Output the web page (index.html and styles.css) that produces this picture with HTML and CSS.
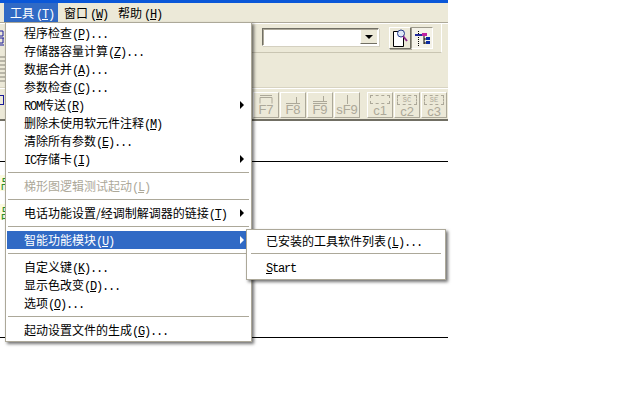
FILE: index.html
```html
<!DOCTYPE html>
<html lang="zh">
<head>
<meta charset="utf-8">
<title>工具菜单</title>
<link rel="stylesheet" href="styles.css">
</head>
<body>
<div class="app">
  <div class="titlebar"></div>
  <div class="menubar">
    <div class="top-item active">工具<span class="lat gap">(<u>T</u>)</span></div>
    <div class="top-item">窗口<span class="lat gap">(<u>W</u>)</span></div>
    <div class="top-item">帮助<span class="lat gap">(<u>H</u>)</span></div>
  </div>
  <div class="toolbar row-one">
    <svg class="left-bit" width="5" height="18" viewBox="0 0 5 18"><path d="M0 2h3v5H0M0 9h4M3 9v5H0M0 16h4" fill="none" stroke="#1a1a9a"/></svg>
    <div class="tool-group">
      <div class="combo"><span class="combo-btn"><i class="combo-arrow"></i></span></div>
      <button class="icon-btn raised">
        <svg width="20" height="20" viewBox="0 0 20 20"><path d="M3.500 3.500h7l3 3v12h-10z" fill="#fff" stroke="#000"/><circle cx="11" cy="5.500" r="3.500" fill="#dfe8f6" stroke="#223a8c"/><path d="M13 8l4 5" stroke="#8a2a8a" stroke-width="2"/></svg>
      </button>
      <button class="icon-btn pressed">
        <svg width="20" height="20" viewBox="0 0 20 20"><path d="M6.500 3v15" stroke="#000" stroke-dasharray="1 1"/><path d="M3 7h7" stroke="#222a9a" stroke-width="2"/><path d="M10 5h5v3h-5z" fill="#c020a0"/><path d="M12 8v8M12 11h2M12 15h2" stroke="#000"/><path d="M14 9h4v3h-4zM14 13h4v3h-4z" fill="#0a2aa0"/></svg>
      </button>
    </div>
  </div>
  <div class="toolbar row-two">
    <div class="left-grey"></div>
  </div>
  <div class="toolbar row-three">
    <span class="left-box"></span>
    <div class="fkeys">
      <button class="fkey"><svg width="16" height="9" viewBox="0 0 16 9"><path d="M2 .5h12M2 2.500h12M2 2.500v6M14 2.500v6" fill="none" stroke="#aca899"/></svg><span>F7</span></button>
      <button class="fkey"><svg width="16" height="9" viewBox="0 0 16 9"><path d="M1 8.500h14M11.500 2v6" fill="none" stroke="#aca899"/></svg><span>F8</span></button>
      <button class="fkey"><svg width="16" height="9" viewBox="0 0 16 9"><path d="M1 8.500h14M1 6.500h14M11.500 1v5" fill="none" stroke="#aca899"/></svg><span>F9</span></button>
      <button class="fkey"><svg width="16" height="9" viewBox="0 0 16 9"><path d="M8.500 0v9" fill="none" stroke="#aca899"/></svg><span>sF9</span></button>
      <button class="fkey key-gap"><span class="coil"></span><span>c1</span></button>
      <button class="fkey"><span class="coil">SC</span><span>c2</span></button>
      <button class="fkey"><span class="coil">SE</span><span>c3</span></button>
      <button class="fkey"><span class="coil"></span></button>
    </div>
  </div>
  <div class="ladder">
    <div class="rung-head"></div>
    <div class="rung">
      <div class="green-text first">吊</div>
      <div class="green-text">吕</div>
    </div>
    <div class="rung-end"></div>
  </div>
</div>

<div class="menu">
  <div class="item">程序检查<span class="lat">(<u>P</u>)...</span></div>
  <div class="item">存储器容量计算<span class="lat">(<u>Z</u>)...</span></div>
  <div class="item">数据合并<span class="lat">(<u>A</u>)...</span></div>
  <div class="item">参数检查<span class="lat">(<u>C</u>)...</span></div>
  <div class="item has-sub"><span class="lat">ROM</span>传送<span class="lat">(<u>R</u>)</span><i class="arrow"></i></div>
  <div class="item">删除未使用软元件注释<span class="lat">(<u>M</u>)</span></div>
  <div class="item">清除所有参数<span class="lat">(<u>E</u>)...</span></div>
  <div class="item has-sub"><span class="lat">IC</span>存储卡<span class="lat">(<u>I</u>)</span><i class="arrow"></i></div>
  <div class="sep"></div>
  <div class="item disabled">梯形图逻辑测试起动<span class="lat">(<u>L</u>)</span></div>
  <div class="sep"></div>
  <div class="item has-sub">电话功能设置/经调制解调器的链接<span class="lat">(<u>T</u>)</span><i class="arrow"></i></div>
  <div class="sep"></div>
  <div class="item has-sub selected">智能功能模块<span class="lat">(<u>U</u>)</span><i class="arrow"></i></div>
  <div class="sep"></div>
  <div class="item">自定义键<span class="lat">(<u>K</u>)...</span></div>
  <div class="item">显示色改变<span class="lat">(<u>D</u>)...</span></div>
  <div class="item">选项<span class="lat">(<u>O</u>)...</span></div>
  <div class="sep"></div>
  <div class="item">起动设置文件的生成<span class="lat">(<u>G</u>)...</span></div>
</div>

<div class="submenu">
  <div class="item">已安装的工具软件列表<span class="lat">(<u>L</u>)...</span></div>
  <div class="sep"></div>
  <div class="item"><span class="lat"><u>S</u>tart</span></div>
</div>
</body>
</html>
```

FILE: styles.css
```css
html, body {
  margin: 0;
  padding: 0;
  width: 640px;
  height: 400px;
  overflow: hidden;
  background: #fff;
  color: #000;
  font: 12px/18px "Noto Sans CJK SC", "Noto Sans", sans-serif;
}

.app {
  width: 448px;
  height: 400px;
  overflow: hidden;
  display: flex;
  flex-direction: column;
  background: #fff;
}

.titlebar {
  height: 3px;
  background: #0a57d8;
  flex: none;
}

.menubar {
  height: 19px;
  flex: none;
  display: flex;
  padding-left: 4px;
  background: #ece9d8;
}

.top-item {
  width: 48px;
  padding: 0 0 0 6px;
  line-height: 20px;
  white-space: nowrap;
}

.top-item.active {
  background: #316ac5;
  color: #fff;
}

.lat {
  font-family: "Liberation Mono", monospace;
  font-size: 12px;
  letter-spacing: -1.2px;
}

.gap {
  margin-left: 2px;
}

.toolbar {
  flex: none;
  background: #ece9d8;
  display: flex;
  box-sizing: border-box;
}

.row-one {
  height: 32px;
  border-top: 1px solid #aca899;
  box-shadow: inset 0 1px 0 #fff;
  align-items: flex-start;
}

.left-bit {
  margin-top: 6px;
  flex: none;
}

.tool-group {
  margin-left: 231px;
  width: 206px;
  height: 29px;
  margin-top: 1px;
  box-sizing: border-box;
  border-right: 1px solid #fff;
  border-bottom: 1px solid #c9c5b2;
  display: flex;
  align-items: flex-start;
  padding: 4px 8px 0 26px;
}

.combo {
  width: 118px;
  height: 18px;
  box-sizing: border-box;
  background: #fff;
  border: 1px solid;
  border-color: #716f64 #fff #fff #716f64;
  box-shadow: inset 1px 1px 0 #aca899, 1px 1px 0 #d4d0c0;
  display: flex;
  justify-content: flex-end;
  padding: 1px;
  margin-right: 10px;
}

.combo-btn {
  width: 16px;
  background: #ece9d8;
  border-left: 1px solid #fff;
  border-bottom: 1px solid #716f64;
  display: flex;
  align-items: center;
  justify-content: center;
}

.combo-arrow {
  display: block;
  border: 4px solid transparent;
  border-top: 4px solid #000;
  border-bottom: 0;
}

.icon-btn {
  width: 22px;
  height: 22px;
  padding: 0;
  margin: -1px 0 0;
  background: #ece9d8;
  display: flex;
  align-items: center;
  justify-content: center;
  border: 1px solid;
}

.icon-btn.raised {
  border-color: #fff #716f64 #716f64 #fff;
  box-shadow: 1px 1px 0 #aca899;
}

.icon-btn.pressed {
  border-color: #9d9a8c #fff #fff #9d9a8c;
  background: #f4f2e8;
}

.row-two {
  height: 34px;
  border-bottom: 1px solid #d8d4c2;
}

.left-grey {
  width: 5px;
  height: 28px;
  background: repeating-linear-gradient(#ece9d8 0 2px, #b9b6a8 2px 4px);
}

.row-three {
  height: 33px;
  border-top: 1px solid #fff;
  border-bottom: 2px solid #716f64;
  align-items: flex-start;
}

.left-box {
  flex: none;
  width: 4px;
  height: 10px;
  margin-top: 6px;
  border: 1px solid #1a1a9a;
  border-left: 0;
  box-sizing: border-box;
}

.fkeys {
  display: flex;
  margin: 3px 0 0 249px;
  flex: none;
}

.fkey {
  width: 26px;
  height: 26px;
  flex: none;
  box-sizing: border-box;
  margin-right: 1px;
  padding: 2px 0 0;
  background: #ece9d8;
  border: 1px solid;
  border-color: #fff #aca899 #aca899 #fff;
  display: flex;
  flex-direction: column;
  align-items: center;
  color: #aca899;
  font: 13px/12px "Liberation Sans", sans-serif;
}

.key-gap {
  margin-left: 6px;
}

.coil {
  width: 20px;
  height: 10px;
  margin-bottom: 1px;
  box-sizing: border-box;
  border: 1px dashed #aca899;
  font: 7px/8px "Liberation Mono", monospace;
  text-align: center;
}

.ladder {
  flex: 1;
  background: #fff;
  overflow: hidden;
}

.rung-head {
  height: 40px;
  border-bottom: 1px solid #000;
}

.rung {
  height: 176px;
  border-bottom: 1px solid #000;
  box-sizing: border-box;
  padding-top: 13px;
}

.green-text {
  width: 6px;
  height: 16px;
  margin-bottom: 13px;
  color: #2f8f2a;
  background: #fbfbe0;
  font-size: 14px;
  line-height: 16px;
  white-space: nowrap;
}

.menu,
.submenu {
  position: absolute;
  box-sizing: border-box;
  background: #fff;
  border: 1px solid #aca899;
  box-shadow: 2px 2px 3px rgba(0, 0, 0, .55);
}

.menu {
  left: 5px;
  top: 22px;
  width: 247px;
  height: 320px;
  padding: 1px;
}

.submenu {
  left: 246px;
  top: 229px;
  width: 200px;
  height: 51px;
  padding: 2px 1px;
}

.item {
  position: relative;
  height: 18px;
  padding-left: 17px;
  white-space: nowrap;
}

.submenu .item {
  padding-left: 18px;
}

.submenu .sep {
  margin: 3px 3px 4px;
}

.sep {
  height: 1px;
  background: #aca899;
  margin: 4px 1px;
}

.disabled {
  color: #aca899;
}

.selected {
  background: #316ac5;
  color: #fff;
}

.arrow {
  position: absolute;
  right: 6px;
  top: 5px;
  border: 4px solid transparent;
  border-left: 4px solid currentColor;
  border-right: 0;
}
```
